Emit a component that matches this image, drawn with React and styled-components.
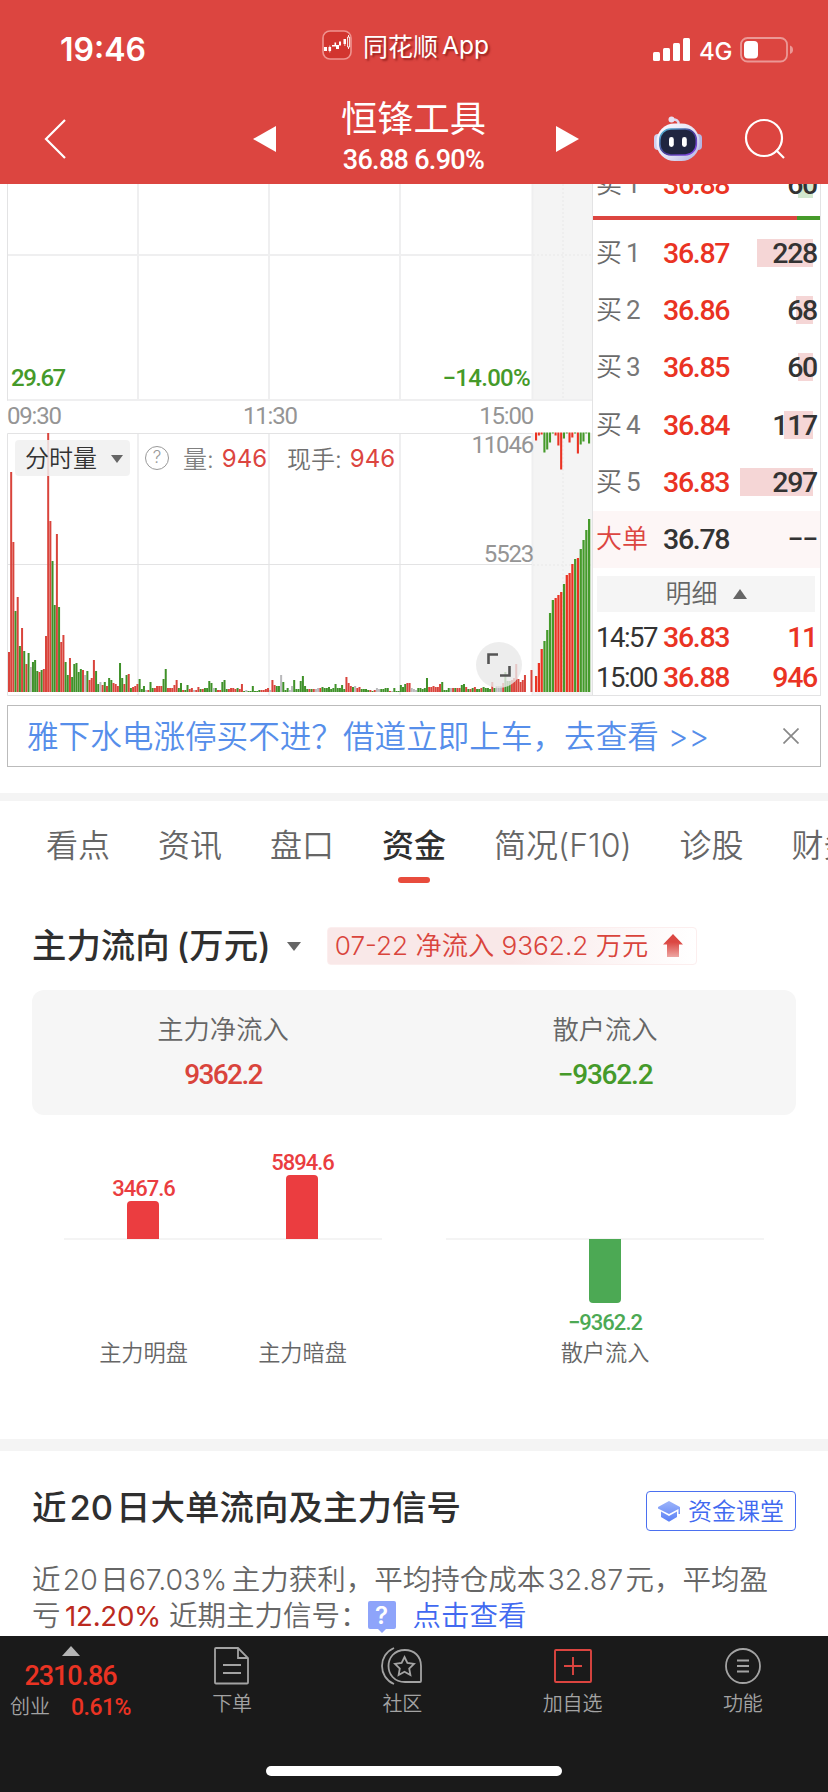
import React from 'react';
import styled, { createGlobalStyle } from 'styled-components';

const RED = '#dc4540';
const UP = '#ea3323';
const DOWN = '#459a2a';
const cjk = `Inter, "Noto Sans CJK SC", sans-serif`;
const din = `Roboto, "Noto Sans CJK SC", sans-serif`;

// one entry per minute: r = up, g = down, n = flat, followed by the bar height
const minuteVolume = `r40 r220 r150 g81 r95 g46 r64 g41 r28 g39 n25 g30 g32 g21 r20 g22 r23 r56 r259 r171
g131 g87 r158 g85 r50 r57 g30 g17 r34 g15 g28 g29 g20 g23 r22 n17 g21 r12 r14 r32
g21 g8 n10 r7 g10 r6 g14 g12 r9 r8 r6 g29 g14 r8 g17 r18 g4 r5 r6 r8
g13 g3 g6 n2 r2 g10 g4 r4 r6 r6 r6 g13 g23 r4 r4 r4 r7 r12 g4 g9
r2 g2 g7 r3 r4 n2 r2 r5 g3 r3 g4 g4 g11 g9 n4 g4 r2 r2 g10 g12
g3 r3 r4 r4 r3 g4 r3 r8 g1 n2 g1 g1 g6 g1 g1 g2 r2 r2 r3 r4
n2 r12 r7 g6 g6 n17 g10 g2 g4 n2 n6 g12 g3 g3 g11 g16 g6 g3 r3 g3
r3 n3 n4 r4 g5 g4 g4 g5 g3 g4 g8 g4 g4 g7 g3 r15 r9 r6 g5 n6
r4 r5 g3 g3 g3 g2 r2 g1 r2 n4 n3 g3 g3 g4 g4 r1 n1 g4 g1 g1
g7 g5 g8 r9 r9 n4 n3 n2 g4 g4 g3 g4 g14 r5 r5 r6 r5 r5 r8 g10
g2 g2 g4 n4 r4 g4 r4 r4 g7 g8 r5 g3 r3 g4 r5 g3 g3 r4 g5 g4
g4 g3 r10 g4 n6 n6 n6 r9 g20 g11 g11 r12 r14 r28 r13 r10 r12 r17 n0 n0 r22`.split(/\s+/);

const auctionVolume = 'r16 r29 r43 g51 g62 g79 g92 r94 r97 r100 g108 r117 r119 r128 g133 r134 g143 g152 g162 g173'.split(' ');
const auctionDelta = 'r8 r3 r2 g20 g17 g10 g1 r3 r13 r37 g6 g1 r10 r5 g1 r21 g12 g9 g1 g11'.split(' ');

const orders = [
  { label: '买', n: 1, price: '36.87', vol: 228, bar: 56 },
  { label: '买', n: 2, price: '36.86', vol: 68, bar: 17 },
  { label: '买', n: 3, price: '36.85', vol: 60, bar: 15 },
  { label: '买', n: 4, price: '36.84', vol: 117, bar: 29 },
  { label: '买', n: 5, price: '36.83', vol: 297, bar: 73 },
];

const tabs = ['看点', '资讯', '盘口', '资金', '简况(F10)', '诊股', '财务'];

const barColor = (code) => ({ r: '#d9443c', g: '#3f9129', n: '#b9b9bb' }[code[0]]);
const brightColor = (code) => (code[0] === 'r' ? UP : DOWN);

const Logo = () => (
  <svg width="30" height="30" viewBox="0 0 30 30">
    <rect x="1" y="1" width="28" height="28" rx="7" fill="#d2352f" stroke="#ef9490" strokeWidth="1.6" />
    <g fill="#fff">
      <rect x="2" y="17" width="3" height="4" />
      <path d="M6.5 17h2.6v4H6.5zM7.5 15.5h.7v7h-.7z" />
      <path d="M10 15h2.5v1.5H10zM12.5 12.5h1.6v4h-1.6zM14 15h3v4h-3zM17 11.5h2v4h-2zM21.5 9h2.5v5h-2.5zM22.5 14h.8v2h-.8z" />
    </g>
    <path d="M26.5 5v2M26.5 17v2M25.6 7h2v10h-2z" fill="none" stroke="#fff" strokeWidth=".9" />
  </svg>
);

const Signal = () => (
  <svg width="38" height="24" viewBox="0 0 38 24" fill="#fff">
    <rect x="0" y="14" width="7" height="9" rx="1.5" />
    <rect x="10" y="10" width="7" height="13" rx="1.5" />
    <rect x="20" y="5" width="7" height="18" rx="1.5" />
    <rect x="30" y="0" width="7" height="23" rx="1.5" />
  </svg>
);

const Battery = () => (
  <svg width="54" height="26" viewBox="0 0 54 26">
    <rect x="1" y="1" width="46" height="23.5" rx="6.5" fill="none" stroke="#eb9895" strokeWidth="1.8" />
    <rect x="4" y="4" width="14" height="17.5" rx="4" fill="#fff" />
    <path d="M50 8.5q3 1 3 4.2t-3 4.2z" fill="#eb9895" />
  </svg>
);

const Robot = () => (
  <svg width="50" height="46" viewBox="0 0 50 46">
    <defs>
      <linearGradient id="shell" x1="0" y1="0" x2="1" y2="1">
        <stop offset="0" stopColor="#fdfbff" />
        <stop offset=".6" stopColor="#e0dff5" />
        <stop offset="1" stopColor="#aeb0dd" />
      </linearGradient>
      <linearGradient id="rim" x1="0" y1="0" x2="1" y2="1">
        <stop offset="0" stopColor="#58c3dd" />
        <stop offset=".5" stopColor="#453c93" />
        <stop offset="1" stopColor="#8b49ee" />
      </linearGradient>
    </defs>
    <path d="M19 3.5q7-.5 6.500 5" fill="none" stroke="#dcd8ef" strokeWidth="2.4" />
    <circle cx="18.500" cy="3.500" r="3" fill="#e6e0f2" />
    <rect x="1" y="18" width="8" height="16" rx="4" fill="#cfd0ef" />
    <rect x="41" y="18" width="8" height="16" rx="4" fill="#b5b6e3" />
    <rect x="3.500" y="7.500" width="43" height="37.500" rx="18" fill="url(#shell)" />
    <rect x="6.800" y="13" width="36.500" height="26" rx="11" fill="#202540" stroke="url(#rim)" strokeWidth="1.6" />
    <rect x="16" y="21" width="4.800" height="10" rx="2.400" fill="#fff" />
    <rect x="29" y="21" width="4.800" height="10" rx="2.400" fill="#fff" />
  </svg>
);

const VolumeChart = () => (
  <svg width="585" height="512" viewBox="7 184 585 512">
    <rect x="532" y="184" width="60" height="216" fill="#f4f4f4" />
    <rect x="532" y="433" width="60" height="263" fill="#f4f4f4" />
    <g stroke="#efeff0" strokeWidth="2">
      <path d="M138 184V400M269 184V400M400 184V400M532.500 184V400" />
      <path d="M138 433V695M269 433V695M400 433V695M532.500 433V695" />
      <path d="M7 255H532M7 400H592" />
    </g>
    <path d="M7.500 184V400.500M7.500 433.500V695.500H592M7.500 433.500H533M7.500 564.500H532" fill="none" stroke="#e3e3e4" />
    <path d="M563 184V400M563 433V692M533 255H592M533 565H592" stroke="#ebebeb" strokeWidth="1.500" strokeDasharray="2 2" />

    {minuteVolume.map((code, i) => {
      const h = Number(code.slice(1));
      return <rect key={i} x={8 + i * 2.177} y={692 - h} width="2" height={h} fill={barColor(code)} />;
    })}
    {auctionVolume.map((code, i) => {
      const h = Number(code.slice(1));
      return <rect key={i} x={535 + i * 2.79} y={692 - h} width="2.250" height={h} fill={brightColor(code)} />;
    })}
    {auctionDelta.map((code, i) => (
      <rect key={i} x={535 + i * 2.79} y="432.500" width="2.100" height={code.slice(1)} fill={brightColor(code)} />
    ))}
  </svg>
);

const App = () => (
  <Screen>
    <GlobalStyle />
    <Header>
      <StatusBar>
        <Clock>19:46</Clock>
        <SourceApp><Logo /><span>同花顺</span><em>App</em></SourceApp>
        <Network><Signal /><b>4G</b><Battery /></Network>
      </StatusBar>
      <NavBar>
        <svg width="24" height="42" viewBox="0 0 24 42"><path d="M21 2L2 21l19 19" fill="none" stroke="#fff" strokeWidth="2.200" /></svg>
        <svg width="24" height="26" viewBox="0 0 24 26"><path d="M0 13L23 0v26z" fill="#fff" /></svg>
        <StockTitle>
          <h1>恒锋工具</h1>
          <p>36.88 6.90%</p>
        </StockTitle>
        <svg width="24" height="26" viewBox="0 0 24 26"><path d="M23 13L0 0v26z" fill="#fff" /></svg>
        <Robot />
        <svg width="42" height="42" viewBox="0 0 42 42" fill="none" stroke="#fff" strokeWidth="2.200">
          <circle cx="20" cy="20" r="18" /><path d="M32 32l8 8" />
        </svg>
      </NavBar>
    </Header>

    <Content>
      <Market>
        <ChartPane>
          <VolumeChart />
          <AxisLabel $top={180} $left={4} $color={DOWN} $weight={500} $gap="-1.500px">29.67</AxisLabel>
          <AxisLabel $top={180} $right={62} $color={DOWN} $weight={500} $gap="-0.700px">−14.00%</AxisLabel>
          <AxisLabel $top={218} $left={0}>09:30</AxisLabel>
          <AxisLabel $top={218} $left={236}>11:30</AxisLabel>
          <AxisLabel $top={218} $right={59}>15:00</AxisLabel>
          <AxisLabel $top={247} $right={59}>11046</AxisLabel>
          <AxisLabel $top={356} $right={59}>5523</AxisLabel>
          <Legend>
            <Picker>分时量<Caret $w={6} $h={8} /></Picker>
            <Help>?</Help>
            <span>量:</span><strong>946</strong>
            <LegendDark>现手:</LegendDark><strong>946</strong>
          </Legend>
          <Expand>
            <svg width="24" height="24" viewBox="0 0 24 24" fill="none" stroke="#555" strokeWidth="2.600">
              <path d="M1.500 11V1.500H11M13 22.500h9.500V13" />
            </svg>
          </Expand>
        </ChartPane>
        <OrderBook>
          <OrderRow $first>
            <Side>卖<i>1</i></Side><Price>36.88</Price>
            <Volume><Depth $w={15} $sell />60</Volume>
          </OrderRow>
          <Ratio />
          {orders.map((o) => (
            <OrderRow key={o.n}>
              <Side>{o.label}<i>{o.n}</i></Side>
              <Price>{o.price}</Price>
              <Volume><Depth $w={o.bar} />{o.vol}</Volume>
            </OrderRow>
          ))}
          <OrderRow $tint>
            <Side $red>大单</Side><Price $dark>36.78</Price><Volume>−−</Volume>
          </OrderRow>
          <DetailToggle>明细<Caret $up $w={7} $h={10} /></DetailToggle>
          <TradeRow><time>14:57</time><Price>36.83</Price><Volume $red>11</Volume></TradeRow>
          <TradeRow><time>15:00</time><Price>36.88</Price><Volume $red>946</Volume></TradeRow>
        </OrderBook>
      </Market>

      <Notice>
        <span>雅下水电涨停买不进？借道立即上车，去查看 &gt;&gt;</span>
        <svg width="16" height="16" viewBox="0 0 16 16" stroke="#888" strokeWidth="1.700"><path d="M.5.5l15 15M15.500.5l-15 15" /></svg>
      </Notice>

      <Divider $h={8} />
      <Tabs>
        {tabs.map((t) => <Tab key={t} $active={t === '资金'}>{t}</Tab>)}
      </Tabs>

      <FlowHead>
        <h2>主力流向<s>(</s>万元<s>)</s></h2>
        <Caret $w={7.500} $h={9} />
        <FlowBadge>
          <span>07-22 净流入 9362.2 万元</span>
          <svg width="20" height="24" viewBox="0 0 20 24">
            <defs>
              <linearGradient id="rise" x1="0" y1="0" x2="0" y2="1">
                <stop offset=".35" stopColor="#db4742" /><stop offset="1" stopColor="#eda6a3" />
              </linearGradient>
            </defs>
            <path d="M10 0L20 10.500h-4V23H4V10.500H0z" fill="url(#rise)" />
          </svg>
        </FlowBadge>
      </FlowHead>

      <Summary>
        <div><span>主力净流入</span><SumValue>9362.2</SumValue></div>
        <div><span>散户流入</span><SumValue $down>−9362.2</SumValue></div>
      </Summary>

      <FlowCharts>
        <FlowChart>
          <Column><Above><b>3467.6</b><Bar $h={38} /></Above><Below /><span>主力明盘</span></Column>
          <Column><Above><b>5894.6</b><Bar $h={64} /></Above><Below /><span>主力暗盘</span></Column>
        </FlowChart>
        <FlowChart>
          <Column><Above /><Below><Bar $h={64} $down /><b>−9362.2</b></Below><span>散户流入</span></Column>
        </FlowChart>
      </FlowCharts>

      <Divider $h={12} />
      <SignalSection>
        <SignalHead>
          <h2>近<u>20</u>日大单流向及主力信号</h2>
          <Course>
            <svg width="22" height="21" viewBox="0 0 22 21">
              <defs>
                <linearGradient id="cap" x1="0" y1="0" x2="0" y2="1">
                  <stop offset="0" stopColor="#9db4fa" /><stop offset="1" stopColor="#5a80f6" />
                </linearGradient>
              </defs>
              <path d="M11 0l11 6v7h-1.500V8L11 13 0 7.500V6zM3 10.500l8 4.500 8-4.500V16l-8 4.800L3 16z" fill="url(#cap)" />
            </svg>
            <span>资金课堂</span>
          </Course>
        </SignalHead>
        <SignalText>
          近<u>20</u>日67.03%<u />主力获利，平均持仓成本<u>32.87</u>元，平均盈<br />
          亏<u /><em>12.20%</em> 近期主力信号：<Tip>?</Tip><a>点击查看</a>
        </SignalText>
      </SignalSection>
    </Content>

    <BottomBar>
      <BottomNav>
        <IndexQuote>
          <Caret $up $w={9} $h={10} $color="#b5b5b5" />
          <strong>2310.86</strong>
          <div><span>创业</span><b>0.61%</b></div>
        </IndexQuote>
        <NavItem>
          <svg width="36" height="38" viewBox="0 0 36 38" fill="none" stroke="#a3a3a3" strokeWidth="1.800">
            <path d="M2 1h22l10 10v24.500q0 1-1 1H2q-1 0-1-1V2q0-1 1-1zM24 1v10h10M9 18h18M9 26h18" />
          </svg>
          <span>下单</span>
        </NavItem>
        <NavItem>
          <svg width="42" height="38" viewBox="0 0 42 38" fill="none" stroke="#a3a3a3" strokeWidth="1.800">
            <path d="M13 1C-3 8-3 30 13 37M24 3c-22 0-22 32 0 32h15q1 0 1-1V19C40 9 33 3 24 3z" />
            <path d="M23.500 10l2.900 6 6.600.900-4.800 4.600 1.200 6.500-5.900-3.200-5.900 3.200 1.200-6.500-4.800-4.600 6.600-.900z" />
          </svg>
          <span>社区</span>
        </NavItem>
        <NavItem>
          <svg width="38" height="38" viewBox="0 0 38 38" fill="none" stroke="#dc4540" strokeWidth="1.900">
            <rect x="1" y="3" width="36" height="32" rx="1" /><path d="M10 19h18M19 10v18" />
          </svg>
          <span>加自选</span>
        </NavItem>
        <NavItem>
          <svg width="38" height="38" viewBox="0 0 38 38" fill="none" stroke="#a3a3a3" strokeWidth="1.800">
            <circle cx="19" cy="19" r="17" /><path d="M13 13.500h12M13 19h12M13 24.500h12" />
          </svg>
          <span>功能</span>
        </NavItem>
      </BottomNav>
      <HomeIndicator />
    </BottomBar>
  </Screen>
);

const GlobalStyle = createGlobalStyle`
  body { margin: 0; background: #fff; }
  * { box-sizing: border-box; }
  svg { display: block; flex: none; }
  h1, h2, p { margin: 0; font-weight: 400; }
  i, em { font-style: normal; }
  u, s { text-decoration: none; }
`;

const Screen = styled.div`
  display: flex;
  flex-direction: column;
  width: 828px;
  height: 1792px;
  overflow: hidden;
  font-family: ${cjk};
  font-weight: 350;
  color: #666;
  white-space: nowrap;
`;

const Header = styled.header`
  flex: none;
  height: 184px;
  background: ${RED};
  color: #fff;
`;

const StatusBar = styled.div`
  display: grid;
  grid-template-columns: 262px 331px 1fr;
  height: 98px;
  padding-left: 60px;
`;

const Clock = styled.div`
  font-size: 32px;
  font-weight: 600;
  line-height: 100px;
`;

const SourceApp = styled.div`
  display: flex;
  align-items: center;
  height: 90px;
  font-size: 25px;
  font-weight: 400;
  text-shadow: 2px 2px 2px rgba(90, 0, 0, 0.5);

  > span { margin: 0 0 1px 11px; }
  > em { margin: 0 0 1px 4px; font-size: 24.500px; }
`;

const Network = styled.div`
  display: flex;
  align-items: center;
  height: 100px;

  > b {
    margin: 2px 8px 0 8px;
    font-size: 24px;
    font-weight: 500;
    letter-spacing: -0.300px;
  }
`;

const NavBar = styled.div`
  display: grid;
  grid-template-columns: 209px 59px 244px 97px 91px 42px;
  align-items: center;
  height: 82px;
  padding-left: 44px;
`;

const StockTitle = styled.div`
  align-self: start;
  width: 203px;
  text-align: center;

  > h1 {
    font-size: 36.300px;
    line-height: 43px;
  }
  > p {
    font-family: ${din};
    font-size: 27px;
    font-weight: 500;
    line-height: 39px;
    letter-spacing: -0.700px;
  }
`;

const Content = styled.main`
  flex: 1;
  min-height: 0;
  overflow: hidden;
`;

const Market = styled.section`
  display: flex;
  height: 512px;
  padding-left: 7px;
  overflow: hidden;
`;

const ChartPane = styled.div`
  position: relative;
  width: 585px;
`;

const AxisLabel = styled.span`
  position: absolute;
  top: ${(p) => p.$top}px;
  ${(p) => (p.$right !== undefined ? `right: ${p.$right}px;` : `left: ${p.$left}px;`)}
  font-family: ${din};
  font-size: 24px;
  font-weight: ${(p) => p.$weight || 400};
  line-height: 28px;
  letter-spacing: ${(p) => p.$gap || '-1.200px'};
  color: ${(p) => p.$color || '#959595'};
`;

const Legend = styled.div`
  position: absolute;
  top: 256px;
  left: 8px;
  display: flex;
  align-items: center;
  height: 36px;
  font-size: 24px;
  color: #808080;

  > span { margin-top: -2px; }
  > strong {
    margin-left: 8px;
    font-weight: 400;
    color: ${RED};
  }
`;

const LegendDark = styled.span`
  margin-left: 20px;
  color: #707070;
`;

const Picker = styled.div`
  display: flex;
  align-items: center;
  justify-content: space-between;
  width: 115px;
  height: 36px;
  margin-right: 15px;
  padding: 1px 7px 0 10px;
  border-radius: 4px;
  background: rgba(240, 240, 240, 0.85);
  line-height: 34px;
  color: #333;
`;

const Caret = styled.i`
  flex: none;
  width: 0;
  height: 0;
  border-left: ${(p) => p.$w}px solid transparent;
  border-right: ${(p) => p.$w}px solid transparent;
  border-${(p) => (p.$up ? 'bottom' : 'top')}: ${(p) => p.$h}px solid ${(p) => p.$color || '#666'};
`;

const Help = styled.i`
  width: 24px;
  height: 24px;
  margin-right: 14px;
  border: 1.500px solid #999;
  border-radius: 50%;
  font-size: 17px;
  line-height: 21px;
  text-align: center;
  color: #999;
`;

const Expand = styled.div`
  position: absolute;
  left: 469px;
  top: 458px;
  display: flex;
  align-items: center;
  justify-content: center;
  width: 46px;
  height: 46px;
  border-radius: 50%;
  background: rgba(232, 232, 232, 0.8);
`;

const OrderBook = styled.div`
  width: 229px;
  height: 512px;
  border: solid #e3e3e4;
  border-width: 0 1px 1px 1px;
  overflow: hidden;
`;

const OrderRow = styled.div`
  display: grid;
  grid-template-columns: 67px 70px 1fr;
  align-items: center;
  height: 57.250px;
  margin-top: ${(p) => (p.$first ? '-29px' : '0')};
  padding: 1px 3px 0 3px;
  background: ${(p) => (p.$tint ? '#fdf6f6' : 'transparent')};
`;

const Side = styled.span`
  font-size: 26px;
  line-height: 36px;
  margin-top: -1px;
  color: ${(p) => (p.$red ? '#dc4540' : '#6a6a6a')};

  > i {
    margin-left: 4px;
    font-family: Roboto, sans-serif;
    font-weight: 400;
    color: #777;
  }
`;

const Price = styled.span`
  font-family: ${din};
  font-size: 28.500px;
  font-weight: 500;
  letter-spacing: -1.300px;
  color: ${(p) => (p.$dark ? '#333' : UP)};
`;

const Volume = styled.span`
  position: relative;
  font-family: ${din};
  font-size: 28.500px;
  font-weight: 500;
  letter-spacing: -1.300px;
  text-align: right;
  color: ${(p) => (p.$red ? UP : '#333')};
`;

// size bar drawn behind the resting quantity
const Depth = styled.i`
  position: absolute;
  z-index: -1;
  right: 4px;
  top: 2px;
  width: ${(p) => p.$w}px;
  height: 28px;
  background: ${(p) => (p.$sell ? '#d2e8cf' : '#f5d6d6')};
`;

const Ratio = styled.div`
  height: 4px;
  margin: 4px 0 4px;
  background: linear-gradient(to right, ${RED} 204px, ${DOWN} 204px);
`;

const DetailToggle = styled.div`
  display: flex;
  align-items: center;
  justify-content: center;
  gap: 15px;
  height: 36px;
  margin: 8px 5px 6px 4px;
  background: #f5f5f5;
  font-size: 26px;
  line-height: 36px;
`;

const TradeRow = styled.div`
  display: grid;
  grid-template-columns: 67px 70px 1fr;
  align-items: center;
  height: 40px;
  padding: 0 3px 0 3px;

  > time {
    font-family: ${din};
    font-size: 27.500px;
    font-weight: 400;
    color: #333;
    letter-spacing: -1.500px;
  }
`;

const Notice = styled.div`
  display: flex;
  align-items: center;
  justify-content: space-between;
  height: 62px;
  margin: 9px 7px 26px;
  padding: 0 21px 0 19px;
  border: 1px solid #bbb;
  font-size: 31.600px;
  color: #568eea;

  > span { margin-top: -4px; }
`;

const Divider = styled.div`
  height: ${(p) => p.$h}px;
  background: #f4f4f4;
`;

const Tabs = styled.nav`
  display: flex;
  gap: 48px;
  height: 84px;
  padding-left: 46px;
  overflow: hidden;
`;

const Tab = styled.div`
  position: relative;
  flex: none;
  font-size: 32px;
  line-height: 90px;
  font-weight: ${(p) => (p.$active ? 500 : 350)};
  color: ${(p) => (p.$active ? '#303030' : '#666')};

  &::after {
    content: '';
    display: ${(p) => (p.$active ? 'block' : 'none')};
    position: absolute;
    left: 16px;
    top: 76px;
    width: 32px;
    height: 6px;
    border-radius: 3px;
    background: #e84c3d;
  }
`;

const FlowHead = styled.div`
  display: flex;
  align-items: center;
  height: 38px;
  margin: 42px 0 25px;
  padding-left: 32px;

  > h2 {
    margin-right: 16px;
    font-size: 34.400px;
    font-weight: 500;
    line-height: 38px;
    color: #2f2f2f;
  }
  > h2 s:first-child { margin-left: 7px; }
`;

const FlowBadge = styled.div`
  display: flex;
  align-items: center;
  justify-content: space-between;
  width: 370px;
  height: 38px;
  margin-left: 26px;
  padding: 0 13px 0 7px;
  border: 1px solid #fceeee;
  border-radius: 4px;
  background: linear-gradient(to right, #f9e8e8 50%, #fff);
  font-size: 26.200px;
  color: #d9443c;

  > span { margin-top: -4px; }
`;

const Summary = styled.div`
  display: grid;
  grid-template-columns: 1fr 1fr;
  height: 125px;
  margin: 0 32px;
  padding-top: 17px;
  border-radius: 12px;
  background: #f6f6f6;
  text-align: center;
  font-size: 26.300px;
  line-height: 45px;

  span { display: block; }
`;

const SumValue = styled.b`
  font-family: ${din};
  font-size: 28px;
  font-weight: 500;
  letter-spacing: ${(p) => (p.$down ? '-1.200px' : '-1.600px')};
  color: ${(p) => (p.$down ? DOWN : '#d9443c')};
`;

const FlowCharts = styled.div`
  display: flex;
  gap: 64px;
  height: 324px;
  padding: 42px 64px 0;
`;

const FlowChart = styled.div`
  display: flex;
  width: 318px;
  height: 220px;
  background: linear-gradient(#f4f4f4, #f4f4f4) 0 81px / 100% 2px no-repeat;
`;

const Column = styled.div`
  display: flex;
  flex-direction: column;
  align-items: center;
  flex: 1;
  font-size: 22.200px;

  b {
    font-family: ${din};
    font-weight: 500;
    font-size: 22px;
    line-height: 25px;
    letter-spacing: -1px;
  }
  > span { margin-top: -6px; }
`;

const Above = styled.div`
  display: flex;
  flex-direction: column;
  align-items: center;
  justify-content: flex-end;
  height: 82px;
  color: #ea3d40;
`;

const Below = styled.div`
  display: flex;
  flex-direction: column;
  align-items: center;
  gap: 7px;
  height: 102px;
  color: #4ca954;
`;

const Bar = styled.div`
  flex: none;
  width: 32px;
  height: ${(p) => p.$h}px;
  border-radius: ${(p) => (p.$down ? '0 0 4px 4px' : '4px 4px 0 0')};
  background: ${(p) => (p.$down ? '#4ca954' : '#eb3d40')};
`;

const SignalSection = styled.section`
  padding: 35px 32px 0;
`;

const SignalHead = styled.div`
  display: flex;
  align-items: center;
  justify-content: space-between;

  > h2 {
    margin-top: -2px;
    font-size: 34.500px;
    font-weight: 500;
    line-height: 40px;
    color: #2f2f2f;
  }
  u { margin: 0 3px; }
`;

const Course = styled.div`
  display: flex;
  align-items: center;
  gap: 8px;
  width: 150px;
  height: 40px;
  margin-top: 5px;
  padding-left: 11px;
  border: 1px solid #4b70f0;
  border-radius: 4px;
  font-size: 24px;
  color: #4169f0;

  > span { margin-top: -3px; }
`;

const SignalText = styled.p`
  margin-top: 31px;
  font-size: 28.500px;
  font-weight: 350;
  line-height: 36px;

  u { margin: 0 2.300px; }
  em { font-size: 27.700px; font-weight: 400; letter-spacing: -0.300px; color: #bb2a20; }
  a { margin-left: 17px; color: #4169f0; }
`;

const Tip = styled.span`
  position: relative;
  display: inline-block;
  width: 28px;
  height: 28px;
  margin-left: -1px;
  border-radius: 2px;
  background: #8ea4fa;
  color: #fff;
  font-size: 24px;
  font-weight: 600;
  line-height: 29px;
  text-align: center;
  vertical-align: 2px;

  &::after {
    content: '';
    position: absolute;
    left: 10px;
    top: 28px;
    border: 4px solid transparent;
    border-top-color: #8ea4fa;
    border-bottom: 0;
  }
`;

const BottomBar = styled.footer`
  flex: none;
  height: 156px;
  background: #1a1a1a;
  color: #a3a3a3;
`;

const BottomNav = styled.div`
  display: flex;
  height: 130px;
`;

const NavItem = styled.div`
  display: flex;
  flex-direction: column;
  align-items: center;
  flex: 1;
  padding-top: 11px;
  font-size: 20px;

  > span { margin-top: 4px; line-height: 30px; }
`;

const IndexQuote = styled.div`
  display: flex;
  flex-direction: column;
  align-items: center;
  width: 147px;
  padding: 10px 6px 0 0;
  font-family: ${din};
  color: ${UP};

  > strong {
    font-size: 27px;
    font-weight: 500;
    line-height: 40px;
    letter-spacing: -1.100px;
  }
  > div {
    display: flex;
    align-items: center;
    justify-content: space-between;
    width: 121px;
    line-height: 23px;
  }
  span { color: #a3a3a3; font-size: 20px; }
  b { font-size: 23px; font-weight: 500; letter-spacing: -0.500px; }
`;

const HomeIndicator = styled.div`
  width: 296px;
  height: 10px;
  margin: 0 auto;
  border-radius: 5px;
  background: #fff;
`;

export default App;
